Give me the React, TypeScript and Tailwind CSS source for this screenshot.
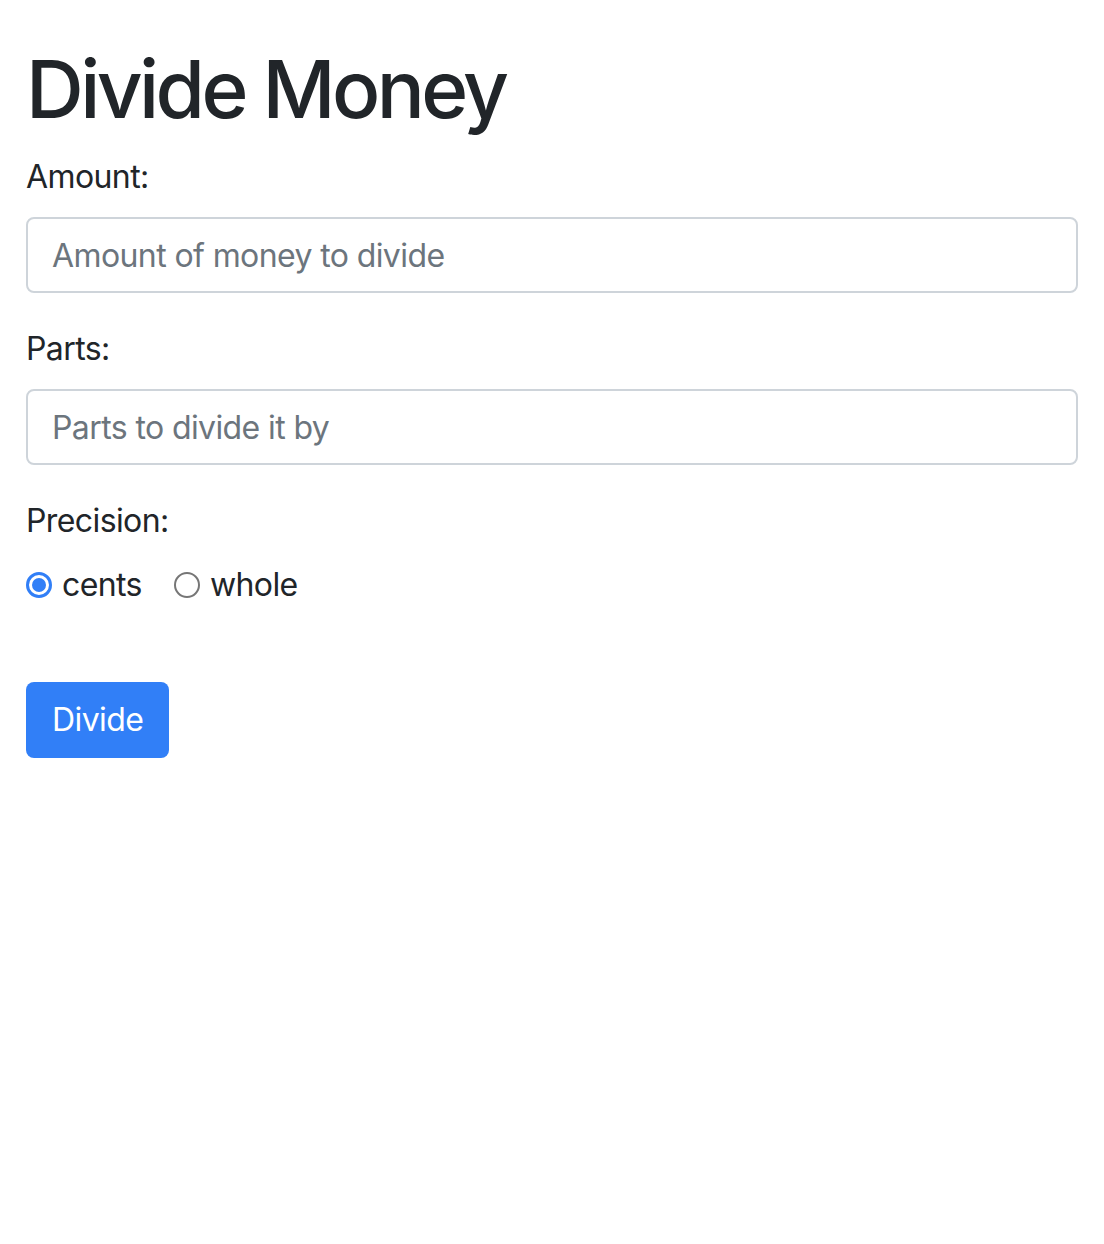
import React, { useState } from "react";

type Precision = "cents" | "whole";

const Radio = ({
  checked,
  label,
  onSelect,
}: {
  checked: boolean;
  label: string;
  onSelect: () => void;
}) => (
  <label className="flex items-center cursor-pointer" onClick={onSelect}>
    {checked ? (
      <span className="flex items-center justify-center w-[26px] h-[26px] rounded-full border-[3px] border-[#317ff7] bg-white">
        <span className="w-[14px] h-[14px] rounded-full bg-[#317ff7]" />
      </span>
    ) : (
      <span className="w-[26px] h-[26px] rounded-full border-2 border-[#767676] bg-white" />
    )}
    <span className="ml-[10px]">{label}</span>
  </label>
);

export default function App() {
  const [precision, setPrecision] = useState<Precision>("cents");

  return (
    <div
      className="min-h-screen bg-white px-[26px] pt-[41px] text-[#212529] text-[32px] leading-[48px] tracking-[-0.6px]"
      style={{ fontFamily: "Inter, 'Noto Sans', sans-serif" }}
    >
      <h1 className="text-[80px] leading-[96px] font-medium tracking-[-3.6px] mb-[16px]">
        Divide Money
      </h1>

      {/* amount */}
      <div className="mb-[32px]">
        <label className="block mb-[16px]">Amount:</label>
        <input
          type="text"
          placeholder="Amount of money to divide"
          className="block w-full h-[76px] px-[24px] border-2 border-[#ced4da] rounded-[8px] text-[32px] tracking-[-0.6px] placeholder:text-[#6c757d] outline-none"
        />
      </div>

      {/* parts */}
      <div className="mb-[32px]">
        <label className="block mb-[16px]">Parts:</label>
        <input
          type="text"
          placeholder="Parts to divide it by"
          className="block w-full h-[76px] px-[24px] border-2 border-[#ced4da] rounded-[8px] text-[32px] tracking-[-0.6px] placeholder:text-[#6c757d] outline-none"
        />
      </div>

      {/* precision */}
      <div className="mb-[73px]">
        <label className="block mb-[16px]">Precision:</label>
        <div className="flex items-center gap-[32px]">
          <Radio
            checked={precision === "cents"}
            label="cents"
            onSelect={() => setPrecision("cents")}
          />
          <Radio
            checked={precision === "whole"}
            label="whole"
            onSelect={() => setPrecision("whole")}
          />
        </div>
      </div>

      <button className="h-[76px] px-[26px] rounded-[8px] bg-[#317ff7] text-white text-[32px] tracking-[-0.6px]">
        Divide
      </button>
    </div>
  );
}
